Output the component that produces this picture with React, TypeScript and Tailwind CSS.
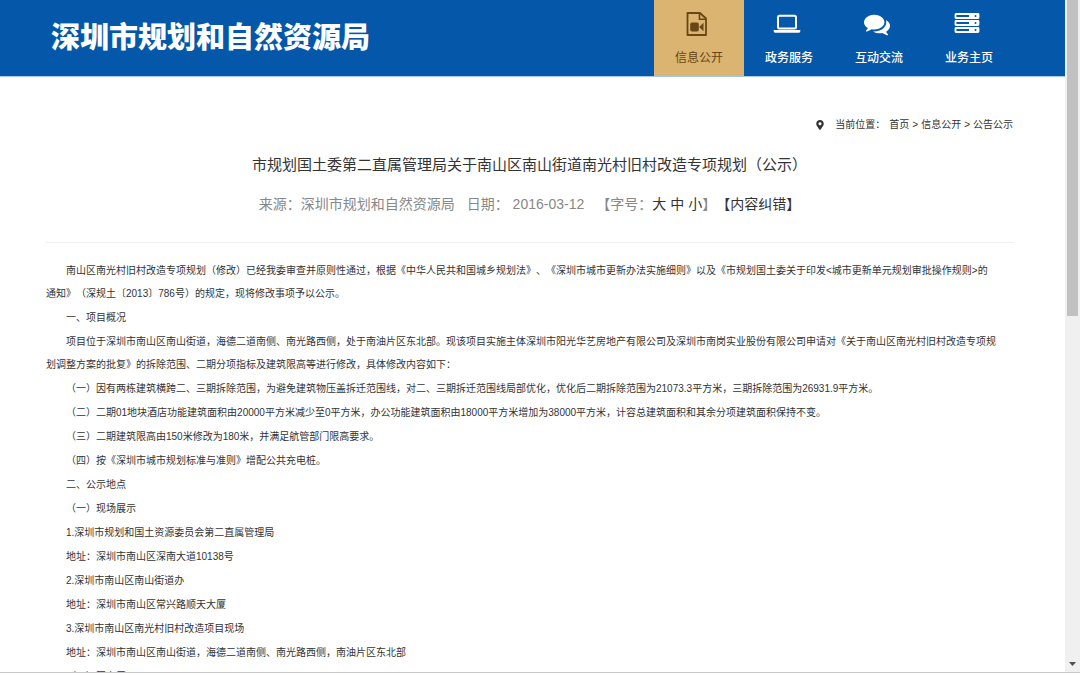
import type { ReactNode } from "react";
import { FaMapMarkerAlt } from "react-icons/fa";

function VideoFileIcon() {
    return (
        <svg width="28" height="24" viewBox="0 0 28 24" fill="none" aria-hidden="true">
            <path d="M4.5 1H17l6 5.5V23H4.5z" stroke="currentColor" strokeWidth="1.8" strokeLinejoin="round" />
            <path d="M16.5 1v6.2H23" stroke="currentColor" strokeWidth="1.6" />
            <rect x="7.2" y="10.5" width="8.6" height="9" rx="1.8" fill="currentColor" />
            <path d="M16.2 15l4.3-4.3v8.6z" fill="currentColor" />
        </svg>
    );
}

function LaptopIcon() {
    return (
        <svg width="28" height="24" viewBox="0 0 28 24" fill="none" aria-hidden="true">
            <rect x="5" y="3.8" width="18" height="12.8" rx="1.5" stroke="currentColor" strokeWidth="2" />
            <path d="M.7 18h26.6v1.2q0 1.5-2 1.5H2.7q-2 0-2-1.5z" fill="currentColor" />
        </svg>
    );
}

function CommentsIcon() {
    return (
        <svg width="26" height="24" viewBox="0 0 1792 1536" fill="currentColor" aria-hidden="true">
            <path d="M1408 640q0 139-94 257t-256.500 186.500T704 1152q-86 0-176-16-124 88-278 128-36 9-86 16h-3q-11 0-20.500-8t-11.500-21q-1-3-1-6.500t.5-6.500 2-6l2.500-5 3.500-5.500 4-5 4.500-5 4-4.500q5-6 23-25t26-29.500 22.500-29 25-38.500 20.500-44q-124-72-195-177T0 640q0-139 94-257t256.500-186.500T704 128t353.500 68.500T1314 383t94 257zm384 256q0 120-71 224.500T1526 1298q10 24 20.500 44t25 38.500 22.500 29 26 29.500 23 25q1 1 4 4.500t4.500 5 4 5 3.500 5.500l2.500 5 2 6 .5 6.500-1 6.500q-3 14-13 22t-22 7q-50-7-86-16-154-40-278-128-90 16-176 16-271 0-472-132 58 4 88 4 161 0 309-45t264-129q125-92 192-212t67-254q0-77-23-152 129 71 204 178t75 230z" />
        </svg>
    );
}

function ServerIcon() {
    return (
        <svg width="28" height="24" viewBox="0 0 28 24" fill="none" aria-hidden="true">
            {[2, 9, 16].map((y) => (
                <g key={y}>
                    <rect x="2.5" y={y} width="23" height="4" rx=".4" stroke="currentColor" strokeWidth="1.8" />
                    <path d={`M16 ${y + 2}h9`} stroke="currentColor" strokeWidth="4" />
                    <circle cx="22.5" cy={y + 2} r="1" fill="#0558a9" />
                </g>
            ))}
        </svg>
    );
}

const navItems = [
    { label: "信息公开", icon: <VideoFileIcon />, active: true },
    { label: "政务服务", icon: <LaptopIcon /> },
    { label: "互动交流", icon: <CommentsIcon /> },
    { label: "业务主页", icon: <ServerIcon /> },
];

const paragraphs: ReactNode[] = [
    <>
        南山区南光村旧村改造专项规划（修改）已经我委审查并原则性通过，根据《中华人民共和国城乡规划法》、《深圳市城市更新办法实施细则》以及《市规划国土委关于印发&lt;城市更新单元规划审批操作规则&gt;的
        <br />
        通知》（深规土〔2013〕786号）的规定，现将修改事项予以公示。
    </>,
    "一、项目概况",
    <>
        项目位于深圳市南山区南山街道，海德二道南侧、南光路西侧，处于南油片区东北部。现该项目实施主体深圳市阳光华艺房地产有限公司及深圳市南岗实业股份有限公司申请对《关于南山区南光村旧村改造专项规
        <br />
        划调整方案的批复》的拆除范围、二期分项指标及建筑限高等进行修改，具体修改内容如下：
    </>,
    "（一）因有两栋建筑横跨二、三期拆除范围，为避免建筑物压盖拆迁范围线，对二、三期拆迁范围线局部优化，优化后二期拆除范围为21073.3平方米，三期拆除范围为26931.9平方米。",
    "（二）二期01地块酒店功能建筑面积由20000平方米减少至0平方米，办公功能建筑面积由18000平方米增加为38000平方米，计容总建筑面积和其余分项建筑面积保持不变。",
    "（三）二期建筑限高由150米修改为180米，并满足航管部门限高要求。",
    "（四）按《深圳市城市规划标准与准则》增配公共充电桩。",
    "二、公示地点",
    "（一）现场展示",
    "1.深圳市规划和国土资源委员会第二直属管理局",
    "地址：深圳市南山区深南大道10138号",
    "2.深圳市南山区南山街道办",
    "地址：深圳市南山区常兴路顺天大厦",
    "3.深圳市南山区南光村旧村改造项目现场",
    "地址：深圳市南山区南山街道，海德二道南侧、南光路西侧，南油片区东北部",
    "（二）网上展示",
];

function Header() {
    return (
        <header className="flex h-[77px] shrink-0 items-stretch justify-between border-b border-[#a9c8e6] bg-[#0558a9] pr-[51px] pl-[51px]">
            <a href="#" className="pt-[18px] text-[29px] leading-10 font-black whitespace-nowrap text-white">
                深圳市规划和自然资源局
            </a>
            <nav className="flex">
                {navItems.map((item) => (
                    <a
                        key={item.label}
                        href="#"
                        className={
                            item.active
                                ? "flex w-[90px] flex-col items-center gap-3 bg-[#dab470] pt-3 text-[#664715]"
                                : "flex w-[90px] flex-col items-center gap-3 pt-3 text-white"
                        }
                    >
                        <span className="mr-1">{item.icon}</span>
                        <span className={item.active ? "text-xs leading-5" : "text-xs leading-5 font-medium"}>
                            {item.label}
                        </span>
                    </a>
                ))}
            </nav>
        </header>
    );
}

function Scrollbar() {
    return (
        <div className="flex w-[15px] shrink-0 flex-col items-center justify-between bg-[#f0f0f0]" aria-hidden="true">
            <div className="h-[47%] w-[11px] bg-[#c1c1c1]" />
            <svg width="7" height="13" viewBox="0 0 7 13">
                <path d="M0 3h7L3.5 7z" fill="#505050" />
            </svg>
        </div>
    );
}

export default function App() {
    return (
        <div
            lang="zh-CN"
            className="flex h-screen flex-col overflow-hidden bg-white pb-[3px] font-['Liberation_Sans','Noto_Sans_CJK_SC',sans-serif] text-[#333] [text-spacing-trim:space-all]"
        >
            <div className="flex min-h-0 flex-1 border-b border-[#c8c8c8]">
                <div className="flex min-w-0 flex-1 flex-col overflow-hidden">
                    <Header />
                    <main className="pt-9 pr-[52px] pl-[46px]">
                        <nav className="flex items-center justify-end text-[10px] leading-6">
                            <FaMapMarkerAlt className="mr-2.5 size-[10px]" />
                            <span className="mr-1">当前位置：</span>
                            <a href="#">首页</a>
                            <span className="mx-[3px]">&gt;</span>
                            <a href="#">信息公开</a>
                            <span className="mx-[3px]">&gt;</span>
                            <a href="#">公告公示</a>
                        </nav>

                        <h1 className="mt-4 text-center text-[15px] leading-6">
                            市规划国土委第二直属管理局关于南山区南山街道南光村旧村改造专项规划（公示）
                        </h1>

                        <div className="mt-[15px] flex justify-center border-b border-[#eee] pb-[26px] text-sm leading-6 whitespace-nowrap text-[#888]">
                            <span className="mr-3">来源：深圳市规划和自然资源局</span>
                            <span className="mr-3">日期： 2016-03-12</span>
                            <span className="flex">
                                【字号：
                                <span className="flex gap-1 text-[#333]">
                                    <button type="button">大</button>
                                    <button type="button">中</button>
                                    <button type="button">小</button>
                                </span>
                                】
                            </span>
                            <button type="button" className="text-[#333]">
                                【内容纠错】
                            </button>
                        </div>

                        <article className="mt-4 flex flex-col gap-px text-[10px] leading-[23px] whitespace-nowrap">
                            {paragraphs.map((text, idx) => (
                                <p key={idx} className="indent-5">
                                    {text}
                                </p>
                            ))}
                        </article>
                    </main>
                </div>
                <Scrollbar />
            </div>
        </div>
    );
}
